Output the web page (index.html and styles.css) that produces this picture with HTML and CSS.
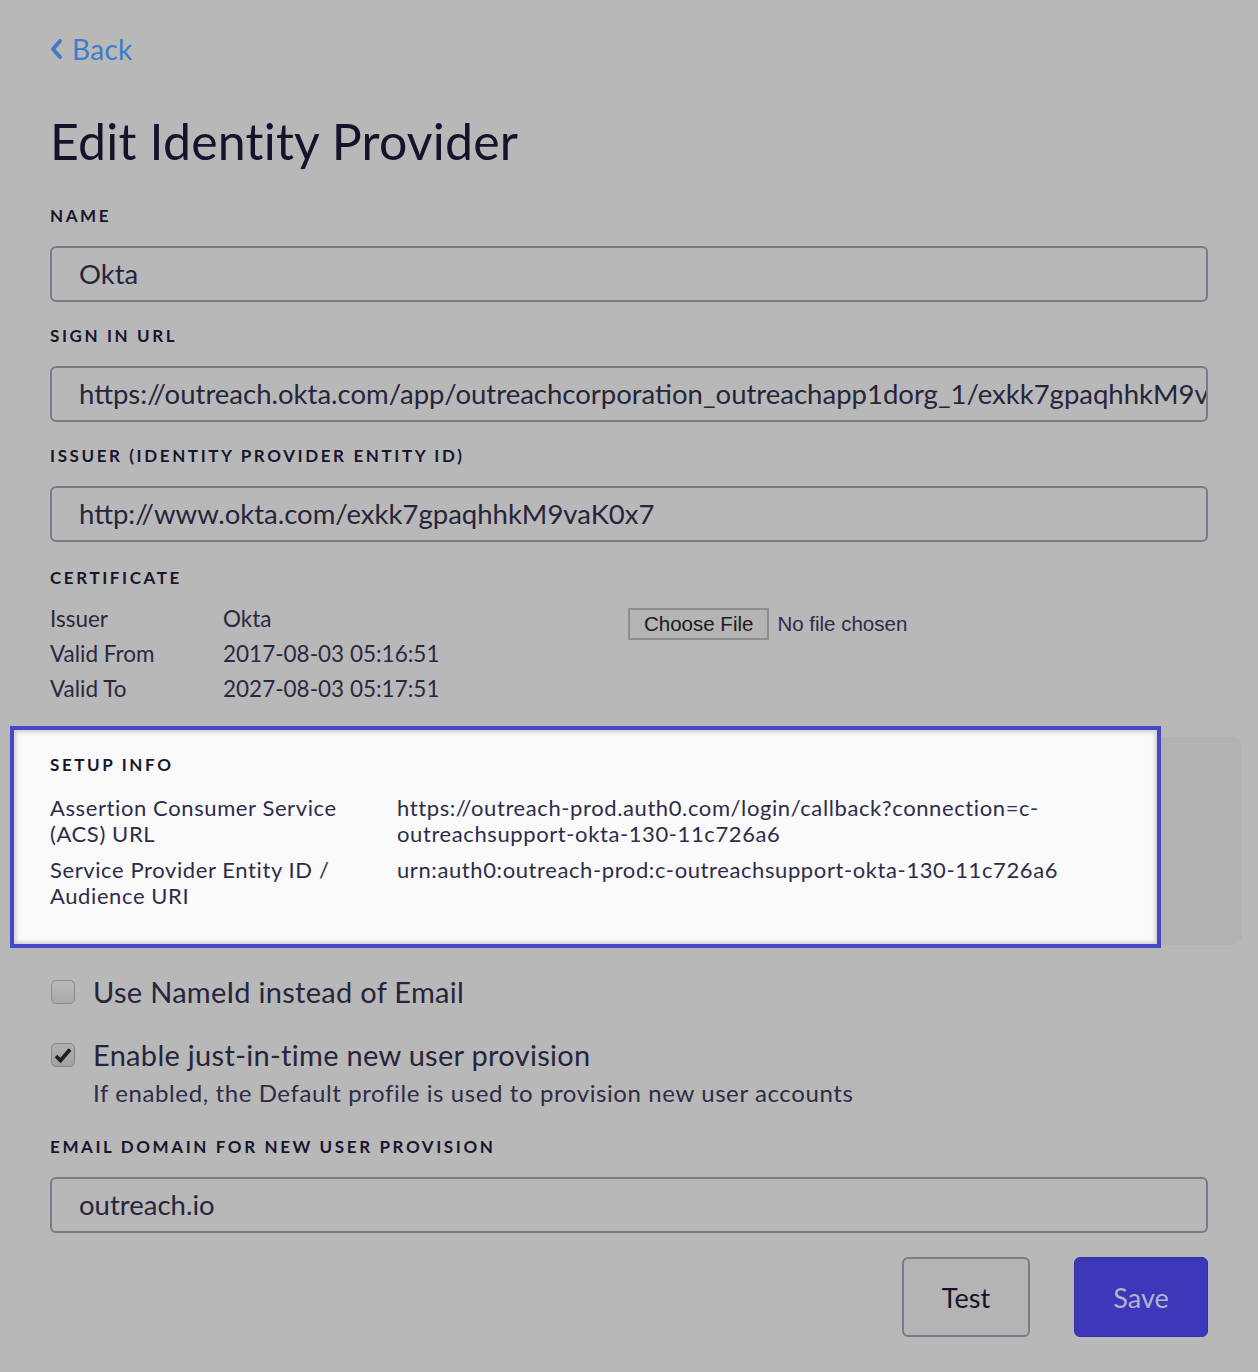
FILE: index.html
```html
<!DOCTYPE html>
<html>
<head>
<meta charset="utf-8">
<title>Edit Identity Provider</title>
<link rel="stylesheet" href="styles.css">
</head>
<body>
<div class="page">
  <a class="back" href="#"><svg class="chev" width="13" height="22" viewBox="0 0 13 22"><path d="M10 3 L3 11 L10 19" fill="none" stroke="#3f7dc8" stroke-width="4" stroke-linecap="round" stroke-linejoin="round"/></svg><span>Back</span></a>
  <h1 class="title">Edit Identity Provider</h1>

  <div class="field">
    <div class="label">NAME</div>
    <div class="input">Okta</div>
  </div>
  <div class="field">
    <div class="label">SIGN IN URL</div>
    <div class="input">https://outreach.okta.com/app/outreachcorporation_outreachapp1dorg_1/exkk7gpaqhhkM9vaK0x7/sso/saml</div>
  </div>
  <div class="field">
    <div class="label">ISSUER (IDENTITY PROVIDER ENTITY ID)</div>
    <div class="input">http://www.okta.com/exkk7gpaqhhkM9vaK0x7</div>
  </div>

  <div class="cert">
    <div class="label">CERTIFICATE</div>
    <div class="cert-body">
      <div class="cert-grid">
        <div class="k">Issuer</div><div class="v">Okta</div>
        <div class="k">Valid From</div><div class="v">2017-08-03 05:16:51</div>
        <div class="k">Valid To</div><div class="v">2027-08-03 05:17:51</div>
      </div>
      <div class="file">
        <span class="file-btn">Choose File</span>
        <span class="file-name">No file chosen</span>
      </div>
    </div>
  </div>

  <div class="setup">
    <div class="setup-content">
      <div class="label">SETUP INFO</div>
      <div class="setup-grid">
        <div class="sk">Assertion Consumer Service (ACS) URL</div>
        <div class="sv">https://outreach-prod.auth0.com/login/callback?connection=c-outreachsupport-okta-130-11c726a6</div>
        <div class="sk">Service Provider Entity ID / Audience URI</div>
        <div class="sv">urn:auth0:outreach-prod:c-outreachsupport-okta-130-11c726a6</div>
      </div>
    </div>
  </div>

  <div class="check">
    <span class="box"></span>
    <span class="check-text">Use NameId instead of Email</span>
  </div>
  <div class="check check2">
    <span class="box checked"><svg width="18" height="16" viewBox="0 0 18 16"><path d="M2 9 L6.5 13.5 L16 2.5" fill="none" stroke="#1e1e24" stroke-width="3.8" stroke-linejoin="miter"/></svg></span>
    <div>
      <div class="check-text">Enable just-in-time new user provision</div>
      <div class="check-sub">If enabled, the Default profile is used to provision new user accounts</div>
    </div>
  </div>

  <div class="field field-email">
    <div class="label">EMAIL DOMAIN FOR NEW USER PROVISION</div>
    <div class="input">outreach.io</div>
  </div>

  <div class="actions">
    <button class="btn btn-test">Test</button>
    <button class="btn btn-save">Save</button>
  </div>
</div>
</body>
</html>
```

FILE: styles.css
```css
html, body {
  margin: 0;
  padding: 0;
  background: #b8b8b8;
}
body {
  font-family: Lato, "Open Sans", sans-serif;
  color: #25233a;
}
.page {
  width: 1158px;
  padding: 32px 0 36px 50px;
}
.back {
  display: inline-flex;
  align-items: center;
  gap: 9px;
  color: #3f7dc8;
  text-decoration: none;
  font-size: 28px;
  line-height: 34px;
  letter-spacing: 0.3px;
}
.chev { display: block; }
.title {
  margin: 45px 0 0 0;
  font-weight: 400;
  font-size: 50px;
  line-height: 60px;
  color: #15132b;
  letter-spacing: 0.2px;
}
.label {
  font-weight: 700;
  font-size: 17px;
  letter-spacing: 2.6px;
  color: #18162e;
  line-height: 20px;
}
.field { margin-top: 35px; }
.field + .field { margin-top: 24px; }
.field .label { margin-bottom: 20px; }
.input {
  box-sizing: border-box;
  height: 56px;
  border: 2px solid #7b7a86;
  border-radius: 6px;
  padding: 0 0 0 27px;
  font-size: 27.5px;
  line-height: 52px;
  color: #27253c;
  white-space: nowrap;
  overflow: hidden;
}
.cert { margin-top: 26px; }
.cert-body {
  display: flex;
  margin-top: 13px;
}
.cert-grid {
  display: grid;
  grid-template-columns: 173px 405px;
  font-size: 22.5px;
  line-height: 35px;
  color: #2a2840;
}
.file {
  display: flex;
  align-items: center;
  align-self: flex-start;
  margin-top: 7px;
  font-family: "Liberation Sans", Arial, sans-serif;
  font-size: 20.5px;
}
.file-btn {
  box-sizing: border-box;
  height: 32px;
  line-height: 28px;
  padding: 0 14px;
  border: 2px solid #8e8e8e;
  background: #b4b4b4;
  color: #1a1a1a;
}
.file-name {
  margin-left: 8px;
  color: #2d2b48;
}
.setup {
  position: relative;
  margin: 31px -34px 0 -40px;
  height: 208px;
  border-radius: 10px;
  background: #b2b2b2;
}
.setup::before {
  content: "";
  position: absolute;
  left: 0;
  top: -11px;
  width: 1151px;
  height: 222px;
  box-sizing: border-box;
  border: 4px solid #4646c8;
  background: #fafafa;
  box-shadow: inset 0 0 4px 2px rgba(0,0,0,0.18);
}
.setup-content {
  position: relative;
  padding: 18px 0 0 40px;
}
.setup-grid {
  display: grid;
  grid-template-columns: 330px 700px;
  column-gap: 17px;
  row-gap: 10px;
  margin-top: 20px;
  font-size: 22px;
  line-height: 26px;
  letter-spacing: 0.6px;
  color: #2e2c4a;
}
.check {
  display: flex;
  align-items: flex-start;
  gap: 18px;
  margin-top: 32px;
}
.check2 { margin-top: 33px; }
.box {
  flex: none;
  box-sizing: border-box;
  width: 24px;
  height: 24px;
  margin-top: 3px;
  margin-left: 1px;
  border: 1.5px solid #8c8c8c;
  border-radius: 5px;
  background: linear-gradient(#b9b9b9, #a9a9a9);
  display: flex;
  align-items: center;
  justify-content: center;
}
.box.checked {
  background: linear-gradient(#b0b0b0, #a2a2a2);
  border-color: #858585;
}
.check-text {
  font-size: 29px;
  line-height: 30px;
  letter-spacing: 0.3px;
  color: #27253c;
}
.check-sub {
  margin-top: 8px;
  font-size: 24px;
  line-height: 30px;
  letter-spacing: 0.6px;
  color: #2e2c48;
}
.field-email { margin-top: 29px; }
.actions {
  display: flex;
  justify-content: flex-end;
  gap: 44px;
  margin-top: 24px;
}
.btn {
  box-sizing: border-box;
  height: 80px;
  border-radius: 6px;
  font-family: Lato, "Open Sans", sans-serif;
  font-size: 27px;
}
.btn-test {
  width: 128px;
  border: 2px solid #7b7a86;
  background: #b4b4b4;
  color: #15132b;
}
.btn-save {
  width: 134px;
  border: 1px solid #3431a8;
  background: #3d38b9;
  color: #b3b3cc;
}
```
